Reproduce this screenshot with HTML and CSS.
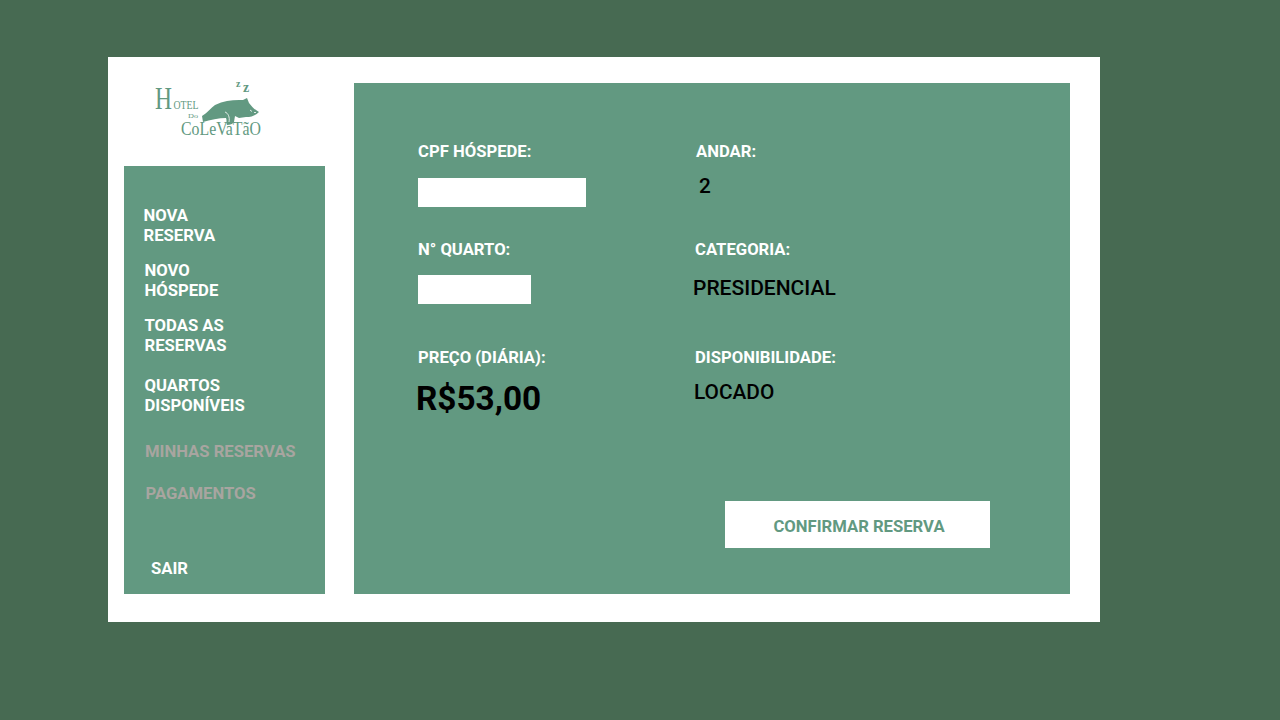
FILE: index.html
```html
<!DOCTYPE html>
<html lang="pt-BR">
<head>
<meta charset="utf-8">
<title>Hotel do Colevatão</title>
<link rel="stylesheet" href="styles.css">
</head>
<body>
<div class="card">
  <aside class="side">
    <div class="logo">
      <svg class="logo-svg" width="120" height="60" viewBox="0 0 120 60">
        <text class="l-h" x="0" y="26" textLength="17" lengthAdjust="spacingAndGlyphs">H</text>
        <text class="l-otel" x="18.500" y="26" textLength="25" lengthAdjust="spacingAndGlyphs">OTEL</text>
        <text class="l-do" x="33" y="35" textLength="10" lengthAdjust="spacingAndGlyphs">Do</text>
        <text class="l-cole" x="26" y="52" textLength="80" lengthAdjust="spacingAndGlyphs">CoLeVaTãO</text>
        <text class="l-z1" x="81" y="3.500">z</text>
        <text class="l-z2" x="88" y="9">z</text>
        <path class="l-pig" d="M47 33 C52 30 56 25 60 22 C68 18 76 17 84 17 L88 17 L92 15 L94 20 C97 24 100 27 104 29 C101 32 97 34 91 34 L84 35 L80 33 L79 39 C78 41 75 42 72 42 C71 39 72 37 71 35 C64 35 55 37 48 39 Z"/>
        <path class="l-mark" d="M70 29 C73 30 75 34 74 39 M95 27 L97 28.500 M99 29.500 L101 29.500"/>
      </svg>
    </div>
    <nav class="nav">
      <a class="item i1">NOVA<br>RESERVA</a>
      <a class="item i2">NOVO<br>HÓSPEDE</a>
      <a class="item i3">TODAS AS<br>RESERVAS</a>
      <a class="item i4">QUARTOS<br>DISPONÍVEIS</a>
      <a class="item i5 off">MINHAS RESERVAS</a>
      <a class="item i6 off">PAGAMENTOS</a>
      <a class="item i7">SAIR</a>
    </nav>
  </aside>
  <main class="main">
    <div class="grid">
      <div class="field f1">
        <div class="label">CPF HÓSPEDE:</div>
        <div class="input w-cpf"></div>
      </div>
      <div class="field f2">
        <div class="label">ANDAR:</div>
        <div class="val v-andar">2</div>
      </div>
      <div class="field f3">
        <div class="label">N° QUARTO:</div>
        <div class="input w-quarto"></div>
      </div>
      <div class="field f4">
        <div class="label">CATEGORIA:</div>
        <div class="val v-cat">PRESIDENCIAL</div>
      </div>
      <div class="field f5">
        <div class="label">PREÇO (DIÁRIA):</div>
        <div class="val v-preco">R$53,00</div>
      </div>
      <div class="field f6">
        <div class="label">DISPONIBILIDADE:</div>
        <div class="val v-disp">LOCADO</div>
      </div>
    </div>
    <div class="actions"><button class="confirm">CONFIRMAR RESERVA</button></div>
  </main>
</div>
</body>
</html>
```
FILE: styles.css
```css
* { box-sizing: border-box; }
html, body { margin: 0; height: 720px; overflow: hidden; }
body {
  background: #476a52;
  padding: 57px 0 0 108px;
  font-family: Roboto, "Liberation Sans", sans-serif;
}
.card {
  width: 992px;
  height: 565px;
  background: #fff;
  display: flex;
  padding: 26px 30px 28px 16px;
}
.side { width: 201px; display: flex; flex-direction: column; }
.logo { height: 83px; padding-left: 31px; }
.logo-svg { display: block; overflow: visible; }
.logo-svg text { font-family: "Liberation Serif", serif; fill: #629981; }
.l-h { font-size: 32px; }
.l-otel { font-size: 13.5px; }
.l-do { font-size: 7px; }
.l-cole { font-size: 19px; }
.logo-svg .l-z1 { font-size: 10px; font-weight: 700; }
.logo-svg .l-z2 { font-size: 14px; font-weight: 700; }
.l-pig { fill: #629981; }
.l-mark { fill: none; stroke: #fff; stroke-width: 0.8; }

.nav {
  height: 428px;
  background: #629981;
  color: #fff;
  font-size: 16.67px;
  font-weight: 700;
  line-height: 20px;
  display: flex;
  flex-direction: column;
  padding-top: 40px;
}
.item { display: block; }
.i1 { margin-left: 19.5px; }
.i2 { margin-left: 20.5px; margin-top: 15px; }
.i3 { margin-left: 20.5px; margin-top: 15px; }
.i4 { margin-left: 20.5px; margin-top: 20px; }
.i5 { margin-left: 21px; margin-top: 26px; }
.i6 { margin-left: 21.5px; margin-top: 22px; }
.i7 { margin-left: 27px; margin-top: 55px; }
.off { color: #a8a5a0; }

.main {
  width: 716px;
  height: 511px;
  margin-left: 29px;
  background: #629981;
  padding: 59px 0 0 64px;
}
.grid {
  display: grid;
  grid-template-columns: 277px 1fr;
  grid-template-rows: 98px 108px 129px;
}
.label { color: #fff; font-size: 16.67px; font-weight: 700; line-height: 20px; }
.input { background: #fff; height: 29px; }
.w-cpf { width: 168px; margin-top: 16px; }
.w-quarto { width: 113px; margin-top: 15px; }
.val { color: #000; }
.f2 { padding-left: 1px; }
.v-andar { font-size: 20.83px; font-weight: 500; line-height: 24px; margin: 12px 0 0 3px; }
.v-cat { font-size: 21px; font-weight: 500; line-height: 24px; margin: 16px 0 0 -2px; }
.v-preco { font-size: 33.33px; font-weight: 700; line-height: 38px; margin: 12px 0 0 -2px; }
.v-disp { font-size: 20.83px; font-weight: 500; line-height: 24px; margin: 12px 0 0 -1px; }
.actions { display: flex; padding-left: 307px; margin-top: 24px; }
.confirm {
  width: 265px;
  height: 47px;
  background: #fff;
  border: 0;
  padding: 4px 0 0 3px;
  color: #629981;
  font: 700 16.67px/20px Roboto, "Liberation Sans", sans-serif;
}
```
